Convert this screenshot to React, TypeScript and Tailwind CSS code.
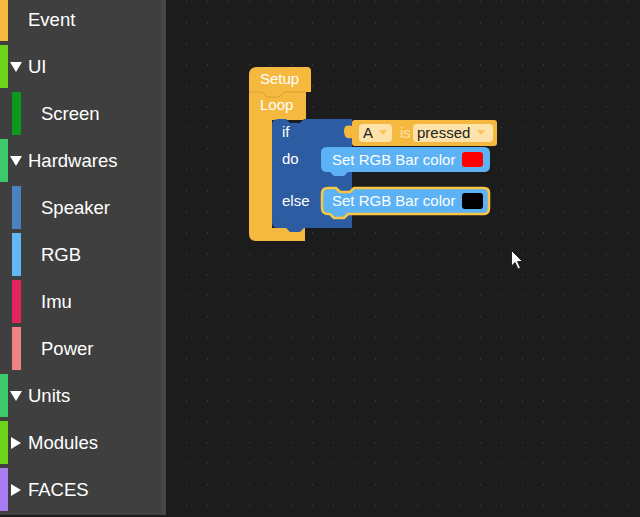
import React from "react";

type Cat = {
  label: string;
  color: string;
  sub?: boolean;
  open?: boolean;
  arrow?: boolean;
};

const CATS: Cat[] = [
  { label: "Event", color: "bg-[#f7b840]" },
  { label: "UI", color: "bg-[#6dd41e]", arrow: true, open: true },
  { label: "Screen", color: "bg-[#0c9a1c]", sub: true },
  { label: "Hardwares", color: "bg-[#3cc96b]", arrow: true, open: true },
  { label: "Speaker", color: "bg-[#4b80c1]", sub: true },
  { label: "RGB", color: "bg-[#62b7f7]", sub: true },
  { label: "Imu", color: "bg-[#e2255f]", sub: true },
  { label: "Power", color: "bg-[#ef8282]", sub: true },
  { label: "Units", color: "bg-[#3cc96b]", arrow: true, open: true },
  { label: "Modules", color: "bg-[#6dd41e]", arrow: true },
  { label: "FACES", color: "bg-[#a67cf0]", arrow: true },
];

function Arrow({ open }: { open?: boolean }) {
  return (
    <svg width="12" height="12" viewBox="0 0 12 12" className="shrink-0">
      {open ? (
        <polygon points="0,1 12,1 6,11" fill="#fff" />
      ) : (
        <polygon points="1,0 11,6 1,12" fill="#fff" />
      )}
    </svg>
  );
}

function Row({ c }: { c: Cat }) {
  if (c.sub) {
    return (
      <div className="h-[43px] flex items-center">
        <div className={`ml-[12px] w-[9px] h-full ${c.color}`} />
        <span className="ml-[20px] pt-[2px] text-[18.5px] text-white leading-none">{c.label}</span>
      </div>
    );
  }
  return (
    <div className="h-[43px] flex items-center">
      <div className={`w-[8px] h-full ${c.color}`} />
      {c.arrow ? (
        <div className="ml-[2px] flex items-center">
          <Arrow open={c.open} />
          <span className="ml-[6px] pt-[2px] text-[18.5px] text-white leading-none">{c.label}</span>
        </div>
      ) : (
        <span className="ml-[20px] pt-[2px] text-[18.5px] text-white leading-none">{c.label}</span>
      )}
    </div>
  );
}

const ORANGE = "#f6b940";
const BLUE = "#2c5da2";
const LIGHT = "#5cb2f4";
const CREAM = "#fde2aa";

export default function App() {
  return (
    <div
      className="w-[640px] h-[517px] flex overflow-hidden bg-[#1c1c1c]"
      style={{ fontFamily: '"Liberation Sans", Arial, sans-serif' }}
    >
      <aside className="w-[166px] h-full shrink-0 bg-[#3f3f3f] border-r-[5px] border-[#464646] flex flex-col gap-[4px] -mt-[2px]">
        {CATS.map((c) => (
          <Row key={c.label} c={c} />
        ))}
      </aside>

      <main className="relative flex-1 h-full">
        <svg
          width="474"
          height="517"
          viewBox="166 0 474 517"
          className="absolute inset-0"
          fontFamily='"Liberation Sans", Arial, sans-serif'
        >
          <defs>
            <pattern id="dots" x="166" y="1" width="21" height="21" patternUnits="userSpaceOnUse">
              <rect x="20" y="0" width="1.5" height="1.5" fill="#3c3c3c" />
            </pattern>
          </defs>
          <rect x="166" y="0" width="474" height="517" fill="url(#dots)" />

          {/* setup / loop */}
          <path
            d="M249,75 Q249,67 257,67 H307 Q311,67 311,71 V92 H306 V120 H272 V228 H305 V241 H256 Q249,241 249,234 Z"
            fill={ORANGE}
          />
          <path d="M249,92 H262 L267,97 H279 L284,92 H306" stroke="#d99e2e" strokeWidth="1" fill="none" />
          <text x="260" y="84" fill="#fff" fontSize="15">Setup</text>
          <text x="260" y="110" fill="#fff" fontSize="15">Loop</text>

          {/* if / else */}
          <path
            d="M272,125 Q272,119 278,119 H286 L290,123 H300 L304,119 H352 V228 H304 L300,232 H290 L286,228 H278 Q272,228 272,222 Z"
            fill={BLUE}
          />
          <text x="282" y="137" fill="#fff" fontSize="15">if</text>
          <text x="282" y="164" fill="#fff" fontSize="15">do</text>
          <text x="282" y="206" fill="#fff" fontSize="15">else</text>

          {/* condition */}
          <path
            d="M352,123 Q352,120 355,120 H494 Q497,120 497,123 V143 Q497,146 494,146 H355 Q352,146 352,143 V138 Q344,140 344,131 Q344,124 352,126 Z"
            fill={ORANGE}
          />
          <rect x="359" y="124" width="33" height="18" rx="4" fill={CREAM} />
          <text x="363" y="138" fill="#222" fontSize="15">A</text>
          <polygon points="379,130 387,130 383,135" fill="#f7c35a" />
          <text x="400" y="138" fill="#fde3b0" fontSize="15">is</text>
          <rect x="413" y="124" width="80" height="18" rx="4" fill={CREAM} />
          <text x="417" y="138" fill="#222" fontSize="15">pressed</text>
          <polygon points="477,130 485,130 481,135" fill="#f7c35a" />

          {/* do statement */}
          <path
            d="M327,147 H484 Q490,147 490,153 V166 Q490,172 484,172 H348 L344,176 H334 L330,172 H327 Q321,172 321,166 V153 Q321,147 327,147 Z"
            fill={LIGHT}
          />
          <text x="332" y="165" fill="#fff" fontSize="15">Set RGB Bar color</text>
          <rect x="462" y="152" width="21" height="15" rx="3" fill="#ff0000" />

          {/* else statement (selected) */}
          <path
            d="M328,188 H336 L340,192 H350 L354,188 H484 Q489,188 489,193 V208 Q489,214 484,214 H348 L344,218 H334 L330,214 H328 Q322,214 322,208 V194 Q322,188 328,188 Z"
            fill={LIGHT}
            stroke="#f8c544"
            strokeWidth="2.5"
          />
          <text x="332" y="206" fill="#fff" fontSize="15">Set RGB Bar color</text>
          <rect x="462" y="193" width="21" height="16" rx="3" fill="#000" />

          {/* cursor */}
          <path
            d="M511.5,250.5 V266 L515,262.5 L518,269 L520.5,268 L517.5,261.5 L522.5,261.5 Z"
            fill="#fff"
            stroke="#222"
            strokeWidth="1"
          />
        </svg>
      </main>
    </div>
  );
}
